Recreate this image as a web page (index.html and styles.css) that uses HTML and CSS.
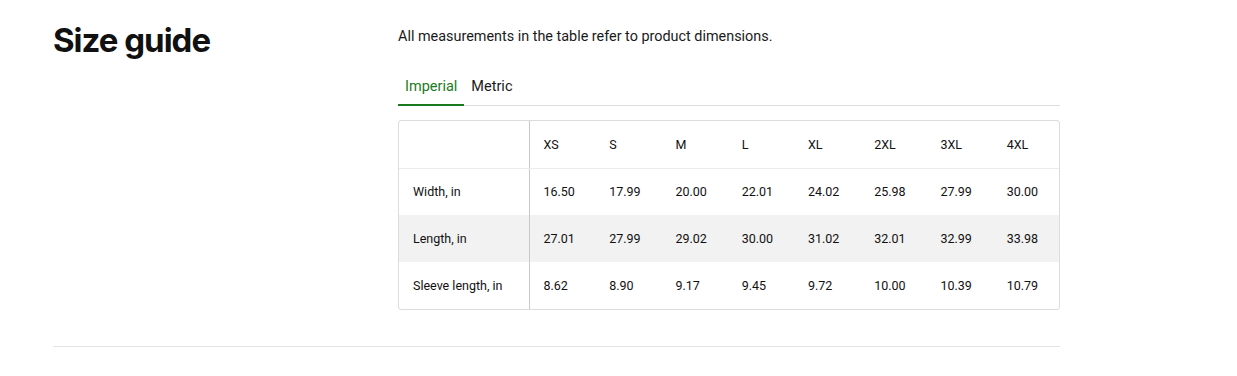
FILE: index.html
```html
<!DOCTYPE html>
<html>
<head>
<meta charset="utf-8">
<link rel="stylesheet" href="styles.css">
</head>
<body>
<section class="guide">
  <div class="row">
    <h2 class="title">Size guide</h2>
    <div class="content">
      <p class="intro">All measurements in the table refer to product dimensions.</p>
      <div class="tabs">
        <span class="tab active">Imperial</span>
        <span class="tab">Metric</span>
      </div>
      <div class="table-box">
        <table class="sizes">
          <thead>
            <tr><th class="label"></th><th>XS</th><th>S</th><th>M</th><th>L</th><th>XL</th><th>2XL</th><th>3XL</th><th>4XL</th></tr>
          </thead>
          <tbody>
            <tr><td class="label">Width, in</td><td>16.50</td><td>17.99</td><td>20.00</td><td>22.01</td><td>24.02</td><td>25.98</td><td>27.99</td><td>30.00</td></tr>
            <tr class="alt"><td class="label">Length, in</td><td>27.01</td><td>27.99</td><td>29.02</td><td>30.00</td><td>31.02</td><td>32.01</td><td>32.99</td><td>33.98</td></tr>
            <tr><td class="label">Sleeve length, in</td><td>8.62</td><td>8.90</td><td>9.17</td><td>9.45</td><td>9.72</td><td>10.00</td><td>10.39</td><td>10.79</td></tr>
          </tbody>
        </table>
      </div>
    </div>
  </div>
  <hr class="divider">
</section>
</body>
</html>
```
FILE: styles.css
```css
* { box-sizing: border-box; }
body {
  margin: 0;
  background: #fff;
  font-family: Roboto, "Liberation Sans", sans-serif;
  color: #1c1c1c;
}
.guide {
  width: 1007px;
  margin-left: 53px;
  padding-top: 20px;
}
.row {
  display: flex;
}
.title {
  margin: 0;
  width: 345px;
  flex: none;
  font-family: Inter, "Liberation Sans", sans-serif;
  font-weight: 700;
  font-size: 33px;
  line-height: 40px;
  letter-spacing: -1px;
  color: #111;
}
.content {
  width: 662px;
}
.intro {
  margin: 8px 0 0;
  font-size: 14.4px;
  line-height: 18px;
  color: #1a1a1a;
}
.tabs {
  display: flex;
  margin-top: 31px;
  border-bottom: 1px solid #dedede;
}
.tab {
  padding: 0 7px 7px;
  font-size: 14.5px;
  line-height: 20px;
  color: #1a1a1a;
}
.tab.active {
  color: #1b7a1b;
  border-bottom: 2px solid #1b7a1b;
  margin-bottom: -1px;
}
.table-box {
  margin-top: 14px;
  width: 662px;
  border: 1px solid #dcdcdc;
  border-radius: 3px;
  overflow: hidden;
}
.sizes {
  width: 100%;
  border-collapse: collapse;
  table-layout: fixed;
  font-size: 12.5px;
}
.sizes th, .sizes td {
  height: 47px;
  padding: 0 0 0 14px;
  text-align: left;
  vertical-align: middle;
  color: #111;
  font-weight: 400;
}
.sizes th {
  border-bottom: 1px solid #ececec;
}
.sizes .label {
  width: 130px;
  border-right: 1px solid #c8c8c8;
}
.sizes tr.alt td {
  background: #f2f2f2;
}
.divider {
  margin: 36px 0 0;
  border: 0;
  border-top: 1px solid #e4e4e4;
}
```
